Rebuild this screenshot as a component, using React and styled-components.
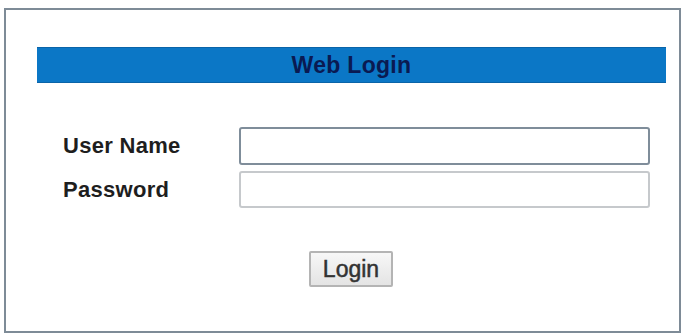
import React from 'react';
import styled, { createGlobalStyle } from 'styled-components';

const GlobalStyle = createGlobalStyle`
  html, body {
    margin: 0;
    padding: 0;
    background: #ffffff;
  }
  body {
    font-family: "Liberation Sans", Arial, sans-serif;
  }
`;

const Frame = styled.div`
  box-sizing: border-box;
  margin: 8px 4px 0 4px;
  width: 677px;
  height: 325px;
  border: 2px solid #7e8b97;
  background: #fff;
  padding: 37px 13px 0 31px;
`;

const TitleBar = styled.div`
  box-sizing: border-box;
  height: 36px;
  background: #0b77c6;
  border-top: 1px solid #0a64a8;
  border-bottom: 1px solid #0a64a8;
  display: flex;
  align-items: center;
  justify-content: center;
  font-size: 23px;
  font-weight: bold;
  letter-spacing: 0.3px;
  color: #0a1a52;
`;

const Form = styled.div`
  display: grid;
  grid-template-columns: 176px 411px;
  grid-auto-rows: 37px;
  row-gap: 7px;
  margin: 44px 0 0 26px;
  align-items: center;
`;

const Label = styled.label`
  font-size: 22px;
  font-weight: bold;
  letter-spacing: 0.3px;
  color: #1e1e1e;
`;

const Input = styled.input`
  box-sizing: border-box;
  width: 411px;
  height: ${(p) => (p.$focused ? '38px' : '37px')};
  border: ${(p) => (p.$focused ? '2px solid #7f8d9a' : '2px solid #c6c9cc')};
  border-radius: 3px;
  background: #fff;
  outline: none;
  font-size: 16px;
  padding: 0 6px;
`;

const ButtonRow = styled.div`
  display: flex;
  justify-content: center;
  margin-top: 43px;
  width: 628px;
`;

const Button = styled.button`
  box-sizing: border-box;
  width: 84px;
  height: 36px;
  border: 2px solid #b4b4b4;
  border-radius: 2px;
  background: linear-gradient(#f7f7f7, #e4e4e4);
  font-family: "Liberation Sans", Arial, sans-serif;
  font-size: 23px;
  color: #333;
  padding: 0;
  -webkit-text-stroke: 0.5px #333;
`;

export default function App() {
  return (
    <>
      <GlobalStyle />
      <Frame>
        <TitleBar>Web Login</TitleBar>
        <Form>
          <Label>User Name</Label>
          <Input $focused type="text" />
          <Label>Password</Label>
          <Input type="password" />
        </Form>
        <ButtonRow>
          <Button>Login</Button>
        </ButtonRow>
      </Frame>
    </>
  );
}
